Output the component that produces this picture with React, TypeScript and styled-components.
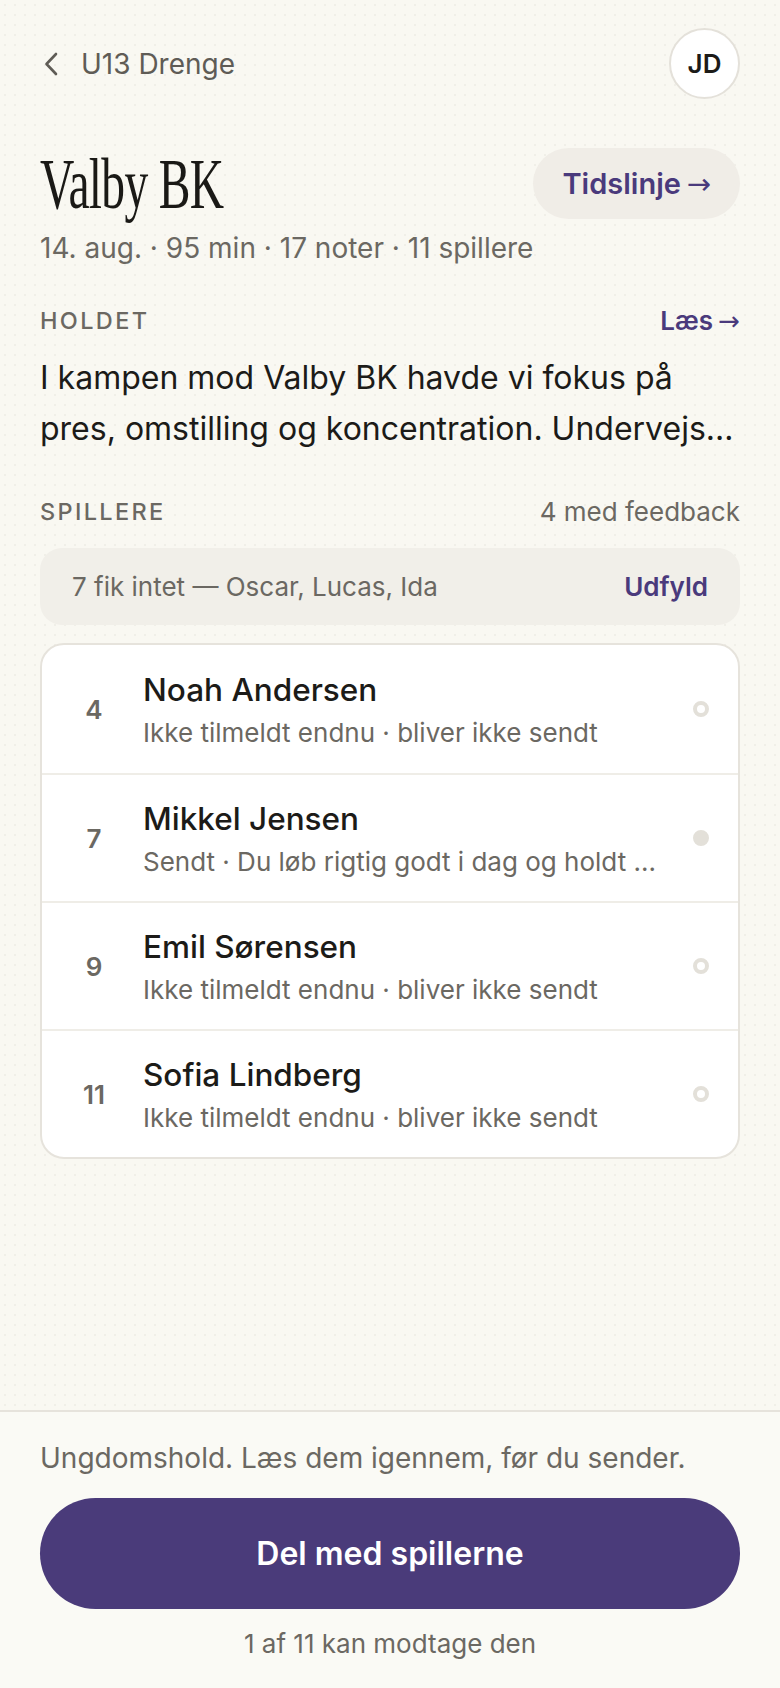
import React from 'react'
import styled, { createGlobalStyle } from 'styled-components'

const GlobalStyle = createGlobalStyle`
  html, body {
    margin: 0;
    padding: 0;
    background: #f9f8f2;
  }
  body {
    font-family: Inter, 'Noto Sans', sans-serif;
    color: #1c1b18;
    -webkit-font-smoothing: antialiased;
  }
  * {
    box-sizing: border-box;
  }
`

const Screen = styled.div`
  min-height: 100vh;
  display: flex;
  flex-direction: column;
`

const Main = styled.main`
  flex: 1;
  padding: 0 40px;
  background-color: #f9f8f2;
  background-image: radial-gradient(circle, #f0efe8 1px, transparent 1.3px);
  background-size: 10px 10px;
`

const TopBar = styled.header`
  display: flex;
  align-items: center;
  justify-content: space-between;
  height: 71px;
  margin-top: 28px;
`

const BackLink = styled.a`
  display: flex;
  align-items: center;
  gap: 22px;
  padding-left: 3px;
  color: #5f5c56;
  font-size: 28px;
  text-decoration: none;
  cursor: pointer;
`

const Avatar = styled.div`
  width: 71px;
  height: 71px;
  border-radius: 50%;
  border: 2px solid #e4e1da;
  background: #ffffff;
  display: flex;
  align-items: center;
  justify-content: center;
  font-size: 26px;
  font-weight: 600;
  color: #1c1b18;
`

const TitleRow = styled.div`
  display: flex;
  align-items: center;
  justify-content: space-between;
  height: 71px;
  margin-top: 49px;
`

const Title = styled.h1`
  margin: 0;
  display: inline-block;
  font-family: 'Liberation Serif', 'DejaVu Serif', serif;
  font-weight: 400;
  font-size: 72px;
  line-height: 1;
  letter-spacing: -1px;
  color: #1a1916;
  transform: scaleX(0.66);
  transform-origin: left center;
  white-space: nowrap;
`

const PillButton = styled.button`
  height: 71px;
  padding: 0 29px;
  border: none;
  border-radius: 36px;
  background: #f0ede7;
  color: #4a3a7c;
  font-family: inherit;
  font-size: 29px;
  font-weight: 600;
  cursor: pointer;
`

const Arrow = styled.span`
  font-family: 'DejaVu Sans', sans-serif;
  font-weight: 400;
  margin-left: 0.2em;
`

const Meta = styled.p`
  margin: 12px 0 0;
  font-size: 28px;
  line-height: 34px;
  color: #6b6862;
`

const SectionHead = styled.div<{ $gap: number }>`
  display: flex;
  align-items: center;
  justify-content: space-between;
  margin-top: ${({ $gap }) => $gap}px;
  height: 30px;
`

const Label = styled.span`
  font-size: 23.5px;
  font-weight: 500;
  letter-spacing: 0.1em;
  color: #6b6862;
`

const LinkText = styled.a`
  font-size: 26px;
  font-weight: 600;
  color: #4a3a7c;
  text-decoration: none;
  cursor: pointer;
`

const Aside = styled.span`
  font-size: 26px;
  color: #6b6862;
`

const Summary = styled.p`
  margin: 17px 0 0;
  font-size: 32px;
  line-height: 51px;
  color: #1c1b18;
  display: -webkit-box;
  -webkit-line-clamp: 2;
  -webkit-box-orient: vertical;
  overflow: hidden;
`

const Banner = styled.div`
  display: flex;
  align-items: center;
  justify-content: space-between;
  height: 77px;
  margin-top: 22px;
  padding: 0 32px;
  border-radius: 22px;
  background: #f1efe9;
  font-size: 26px;
  color: #6b6862;
`

const BannerAction = styled.a`
  font-size: 26px;
  font-weight: 600;
  color: #4a3a7c;
  cursor: pointer;
`

const Card = styled.ul`
  list-style: none;
  margin: 18px 0 0;
  padding: 0;
  background: #ffffff;
  border: 2px solid #e6e3dc;
  border-radius: 24px;
  overflow: hidden;
`

const Row = styled.li`
  display: flex;
  align-items: center;
  height: 128px;
  padding: 0 29px 0 20px;
  & + & {
    border-top: 2px solid #efede7;
  }
`

const Number = styled.span`
  width: 64px;
  flex-shrink: 0;
  text-align: center;
  font-size: 26px;
  font-weight: 600;
  color: #6b6862;
`

const RowBody = styled.div`
  flex: 1;
  min-width: 0;
  margin-left: 17px;
  display: flex;
  flex-direction: column;
  gap: 8px;
`

const Name = styled.span`
  font-size: 31.5px;
  line-height: 38px;
  font-weight: 500;
  color: #1c1b18;
`

const Status = styled.span`
  font-size: 26px;
  line-height: 31px;
  color: #6b6862;
  white-space: nowrap;
`

const Dot = styled.span<{ $filled?: boolean }>`
  width: 16px;
  height: 16px;
  flex-shrink: 0;
  border-radius: 50%;
  border: 4px solid #e3e0d9;
  background: ${({ $filled }) => ($filled ? '#e3e0d9' : '#ffffff')};
`

const Footer = styled.footer`
  border-top: 2px solid #e6e3dc;
  background: #fafaf5;
  padding: 29px 40px 28px;
  display: flex;
  flex-direction: column;
`

const Note = styled.p`
  margin: 0;
  font-size: 28px;
  line-height: 34px;
  color: #6b6862;
`

const PrimaryButton = styled.button`
  margin-top: 23px;
  height: 111px;
  width: 100%;
  border: none;
  border-radius: 56px;
  background: #4a3b7a;
  color: #ffffff;
  font-family: inherit;
  font-size: 32px;
  font-weight: 600;
  cursor: pointer;
`

const Caption = styled.p`
  margin: 19px 0 0;
  text-align: center;
  font-size: 26px;
  line-height: 32px;
  color: #6b6862;
`

const players = [
  { no: 4, name: 'Noah Andersen', status: 'Ikke tilmeldt endnu · bliver ikke sendt', sent: false },
  { no: 7, name: 'Mikkel Jensen', status: 'Sendt · Du løb rigtig godt i dag og holdt ...', sent: true },
  { no: 9, name: 'Emil Sørensen', status: 'Ikke tilmeldt endnu · bliver ikke sendt', sent: false },
  { no: 11, name: 'Sofia Lindberg', status: 'Ikke tilmeldt endnu · bliver ikke sendt', sent: false },
]

export default function App() {
  return (
    <Screen>
      <GlobalStyle />
      <Main>
        <TopBar>
          <BackLink>
            <svg width="16" height="26" viewBox="0 0 16 26" fill="none">
              <path d="M13 3 L3.5 13 L13 23" stroke="#5f5c56" strokeWidth="2.6" strokeLinecap="round" strokeLinejoin="round" />
            </svg>
            U13 Drenge
          </BackLink>
          <Avatar>JD</Avatar>
        </TopBar>

        <TitleRow>
          <Title>Valby BK</Title>
          <PillButton>
            Tidslinje<Arrow>→</Arrow>
          </PillButton>
        </TitleRow>
        <Meta>14. aug. · 95 min · 17 noter · 11 spillere</Meta>

        <SectionHead $gap={40}>
          <Label>HOLDET</Label>
          <LinkText>
            Læs<Arrow>→</Arrow>
          </LinkText>
        </SectionHead>
        <Summary>I kampen mod Valby BK havde vi fokus på pres, omstilling og koncentration. Undervejs...</Summary>

        <SectionHead $gap={42}>
          <Label>SPILLERE</Label>
          <Aside>4 med feedback</Aside>
        </SectionHead>
        <Banner>
          <span>7 fik intet — Oscar, Lucas, Ida</span>
          <BannerAction>Udfyld</BannerAction>
        </Banner>

        <Card>
          {players.map((p) => (
            <Row key={p.no}>
              <Number>{p.no}</Number>
              <RowBody>
                <Name>{p.name}</Name>
                <Status>{p.status}</Status>
              </RowBody>
              <Dot $filled={p.sent} />
            </Row>
          ))}
        </Card>
      </Main>

      <Footer>
        <Note>Ungdomshold. Læs dem igennem, før du sender.</Note>
        <PrimaryButton>Del med spillerne</PrimaryButton>
        <Caption>1 af 11 kan modtage den</Caption>
      </Footer>
    </Screen>
  )
}
